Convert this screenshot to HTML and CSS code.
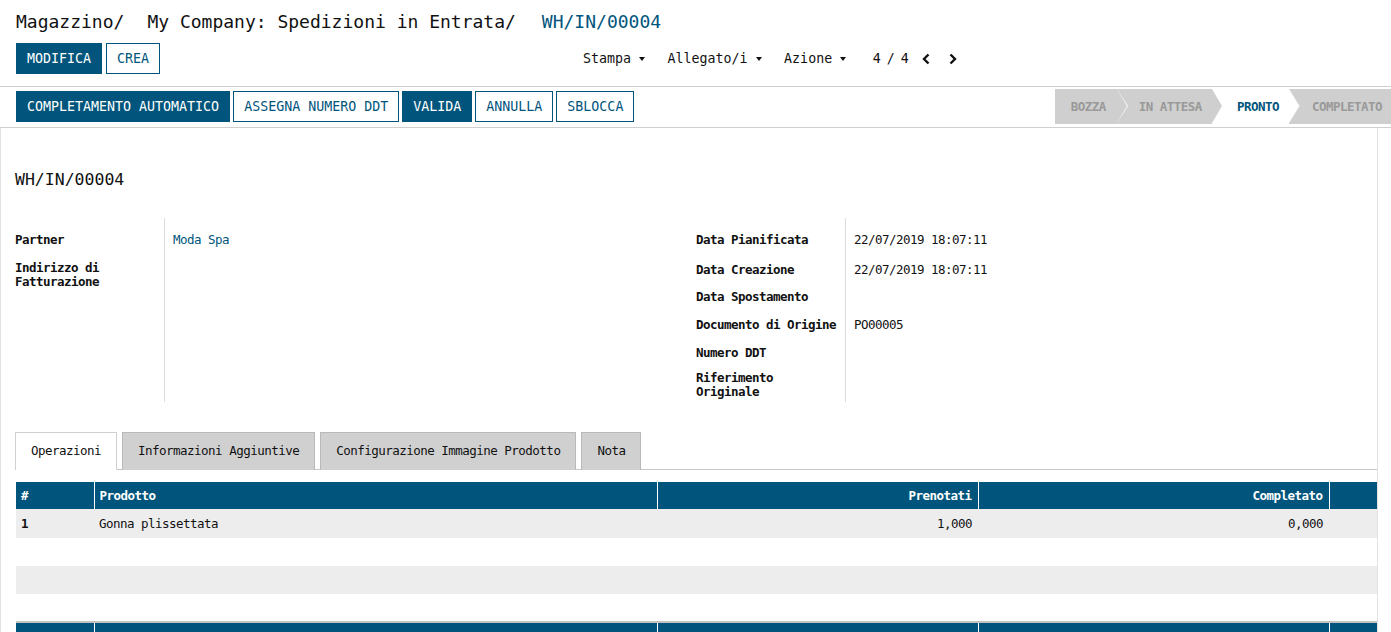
FILE: index.html
```html
<!DOCTYPE html>
<html lang="it">
<head>
<meta charset="utf-8">
<title>WH/IN/00004</title>
<link rel="stylesheet" href="styles.css">
</head>
<body>
<div class="control-panel">
  <ol class="breadcrumb">
    <li class="crumb">Magazzino</li>
    <li class="crumb">My Company: Spedizioni in Entrata</li>
    <li class="crumb active">WH/IN/00004</li>
  </ol>
  <div class="cp-bottom">
    <div class="cp-buttons">
      <button class="btn btn-primary">MODIFICA</button>
      <button class="btn btn-secondary">CREA</button>
    </div>
    <div class="cp-sidebar">
      <span class="dropdown">Stampa<span class="caret"></span></span>
      <span class="dropdown">Allegato/i<span class="caret"></span></span>
      <span class="dropdown">Azione<span class="caret"></span></span>
    </div>
    <div class="pager">
      <span class="pager-value">4 / 4</span>
      <span class="pager-btn"><svg width="10" height="12" viewBox="0 0 10 12"><path d="M7.5 1.5 L3 6 L7.5 10.5" fill="none" stroke="#111" stroke-width="2.4"/></svg></span>
      <span class="pager-btn"><svg width="10" height="12" viewBox="0 0 10 12"><path d="M2.5 1.5 L7 6 L2.5 10.5" fill="none" stroke="#111" stroke-width="2.4"/></svg></span>
    </div>
  </div>
</div>

<div class="form-header">
  <div class="header-buttons">
    <button class="btn btn-primary">COMPLETAMENTO AUTOMATICO</button>
    <button class="btn btn-secondary">ASSEGNA NUMERO DDT</button>
    <button class="btn btn-primary">VALIDA</button>
    <button class="btn btn-secondary">ANNULLA</button>
    <button class="btn btn-secondary">SBLOCCA</button>
  </div>
  <ul class="statusbar">
    <li class="status first">BOZZA</li>
    <li class="status">IN ATTESA</li>
    <li class="status current">PRONTO</li>
    <li class="status last">COMPLETATO</li>
  </ul>
</div>

<div class="sheet">
  <h1 class="record-title">WH/IN/00004</h1>
  <div class="groups">
    <div class="group">
      <div class="lbl r-std">Partner</div><div class="val r-std"><span class="link">Moda Spa</span></div>
      <div class="lbl r-addr">Indirizzo di<br>Fatturazione</div><div class="val r-addr"></div>
    </div>
    <div class="group">
      <div class="lbl r1">Data Pianificata</div><div class="val r1">22/07/2019 18:07:11</div>
      <div class="lbl r2">Data Creazione</div><div class="val r2">22/07/2019 18:07:11</div>
      <div class="lbl r-std">Data Spostamento</div><div class="val r-std"></div>
      <div class="lbl r-std">Documento di Origine</div><div class="val r-std">PO00005</div>
      <div class="lbl r-std">Numero DDT</div><div class="val r-std"></div>
      <div class="lbl r-last">Riferimento<br>Originale</div><div class="val r-last"></div>
    </div>
  </div>

  <ul class="tabs">
    <li class="tab active">Operazioni</li>
    <li class="tab">Informazioni Aggiuntive</li>
    <li class="tab">Configurazione Immagine Prodotto</li>
    <li class="tab">Nota</li>
  </ul>

  <table class="lines">
    <colgroup>
      <col class="c-num"><col class="c-prod"><col class="c-pren"><col class="c-comp"><col class="c-end">
    </colgroup>
    <thead>
      <tr><th>#</th><th>Prodotto</th><th class="num">Prenotati</th><th class="num">Completato</th><th></th></tr>
    </thead>
    <tbody>
      <tr class="odd"><td class="bold">1</td><td>Gonna plissettata</td><td class="num">1,000</td><td class="num">0,000</td><td></td></tr>
      <tr class="empty"><td></td><td></td><td></td><td></td><td></td></tr>
      <tr class="empty odd"><td></td><td></td><td></td><td></td><td></td></tr>
      <tr class="empty"><td></td><td></td><td></td><td></td><td></td></tr>
    </tbody>
    <tfoot>
      <tr><td></td><td></td><td></td><td></td><td></td></tr>
    </tfoot>
  </table>
</div>
</body>
</html>
```

FILE: styles.css
```css
* { box-sizing: border-box; }

html, body {
  margin: 0;
  padding: 0;
  background: #fff;
}

body {
  font-family: "DejaVu Sans Mono", monospace;
  font-size: 12.5px;
  letter-spacing: -0.52px;
  color: #111;
  overflow: hidden;
}

/* ---------- control panel ---------- */
.control-panel {
  padding: 10px 16px 12px 16px;
  border-bottom: 1px solid #cfcfcf;
  height: 87px;
}

.breadcrumb {
  list-style: none;
  margin: 0;
  padding: 0;
  display: flex;
  font-size: 18px;
  line-height: 24px;
  letter-spacing: 0;
  color: #111;
}

.crumb:not(.active)::after {
  content: "/";
  margin-right: 23px;
}

.crumb + .crumb:not(.active)::after {
  margin-right: 26px;
}

.crumb.active {
  color: #01557c;
}

.cp-bottom {
  display: flex;
  align-items: center;
  margin-top: 9px;
}

.cp-buttons {
  flex: 0 0 567px;
  display: flex;
  gap: 4px;
}

.btn {
  font-family: "DejaVu Sans Mono", monospace;
  font-size: 13.3px;
  font-weight: normal;
  letter-spacing: 0;
  line-height: 15px;
  padding: 7px 10px;
  border: 1px solid #01557c;
  border-radius: 0;
  cursor: pointer;
  white-space: nowrap;
}

.btn-primary {
  background: #01557c;
  color: #fff;
}

.btn-secondary {
  background: #fff;
  color: #01557c;
}

.cp-sidebar {
  display: flex;
  font-size: 13.3px;
  letter-spacing: 0;
  color: #111;
}

.dropdown {
  display: flex;
  align-items: center;
  margin-right: 22.5px;
}

.caret {
  display: inline-block;
  width: 0;
  height: 0;
  margin-left: 8px;
  border-left: 3.5px solid transparent;
  border-right: 3.5px solid transparent;
  border-top: 4px solid #111;
}

.pager {
  display: flex;
  align-items: center;
  margin-left: 4px;
  font-size: 13.3px;
  letter-spacing: 0;
}

.pager-value {
  letter-spacing: -1px;
  margin-right: 9px;
}

.pager-btn {
  display: flex;
  align-items: center;
  padding: 0 4px;
  margin-right: 9px;
}

/* ---------- form header / statusbar ---------- */
.form-header {
  display: flex;
  align-items: flex-start;
  padding: 4px 0 4px 16px;
  border-bottom: 1px solid #cfcfcf;
  height: 41px;
}

.header-buttons {
  display: flex;
  gap: 3px;
}

.statusbar {
  list-style: none;
  margin: -2px 0 0 auto;
  padding: 0;
  display: flex;
  height: 35px;
}

.status {
  position: relative;
  height: 35px;
  line-height: 35px;
  padding: 0 10px 0 22px;
  background: #cfcfcf;
  color: #999;
  font-weight: bold;
  font-size: 12.5px;
}

.status.first {
  padding-left: 16px;
  padding-right: 11px;
}

.status.current {
  padding-left: 25px;
}

.status.last {
  padding-left: 23px;
  padding-right: 9px;
}

.status::before,
.status::after {
  content: "";
  position: absolute;
  top: 0;
  width: 0;
  height: 0;
  border-top: 17.5px solid transparent;
  border-bottom: 17.5px solid transparent;
}

.status::before {
  right: -11px;
  border-left: 11px solid #fff;
  z-index: 1;
}

.status::after {
  right: -10px;
  border-left: 10px solid #cfcfcf;
  z-index: 2;
}

.status.current {
  background: #fff;
  color: #01557c;
}

.status.current::before {
  border-left-color: #e4e4e4;
}

.status.current::after {
  border-left-color: #fff;
}

.status.last::before,
.status.last::after {
  display: none;
}

/* ---------- sheet ---------- */
.sheet {
  width: 1378px;
  border-left: 1px solid #e2e2e2;
  border-right: 1px solid #e2e2e2;
  padding: 42px 0 40px 14px;
  min-height: 520px;
}

.record-title {
  margin: 0 0 28px 0;
  font-size: 16.5px;
  line-height: 20px;
  font-weight: normal;
  letter-spacing: 0;
}

.groups {
  display: flex;
}

.group {
  flex: 0 0 681px;
  display: grid;
  grid-template-columns: 149px 1fr;
  grid-auto-rows: auto;
  align-content: start;
  padding-top: 8px;
  background: linear-gradient(#dcdcdc, #dcdcdc) no-repeat 149px 0 / 1px 100%;
}

.lbl {
  font-weight: bold;
  line-height: 14px;
}

.val {
  line-height: 14px;
  padding-left: 9px;
}

.r-std { padding-top: 7px; padding-bottom: 7px; }
.r-addr { padding-top: 7px; padding-bottom: 10px; }
.r1 { padding-top: 7px; padding-bottom: 9px; }
.r2 { padding-top: 7px; padding-bottom: 6px; }
.r-last { padding-top: 4px; padding-bottom: 3px; }

.link {
  color: #01557c;
}

/* ---------- tabs ---------- */
.tabs {
  list-style: none;
  margin: 30px 0 0 0;
  padding: 0;
  display: flex;
  gap: 5px;
  border-bottom: 1px solid #c8c8c8;
  height: 38px;
}

.tab {
  height: 38px;
  padding: 11px 15px 0 15px;
  line-height: 14px;
  background: #d0d0d0;
  border: 1px solid #b9b9b9;
  border-bottom: none;
  color: #111;
}

.tab.active {
  background: #fff;
  border-color: #d0d0d0;
  height: 38px;
  margin-bottom: -1px;
  position: relative;
}

/* ---------- lines table ---------- */
.lines {
  margin: 12px 0 0 1px;
  border-collapse: collapse;
  table-layout: fixed;
  width: 1361px;
}

.c-num { width: 78px; }
.c-prod { width: 563px; }
.c-pren { width: 321px; }
.c-comp { width: 351px; }
.c-end { width: 48px; }

.lines th {
  background: #01557c;
  color: #fff;
  font-weight: bold;
  text-align: left;
  height: 27px;
  padding: 0 5px;
  line-height: 14px;
}

.lines th + th {
  border-left: 1px solid #fff;
}

.lines td {
  height: 28px;
  padding: 0 5px;
  line-height: 14px;
}

.lines tbody tr:first-child td {
  height: 29px;
}

.lines tbody tr.odd td {
  background: #ededed;
}

.lines .num {
  text-align: right;
  padding-right: 6px;
}

.lines .bold {
  font-weight: bold;
}

.lines tfoot td {
  background: #01557c;
  border-top: 2px solid #c4c4c4;
  height: 27px;
}

.lines tfoot td + td {
  border-left: 1px solid #fff;
}
```
